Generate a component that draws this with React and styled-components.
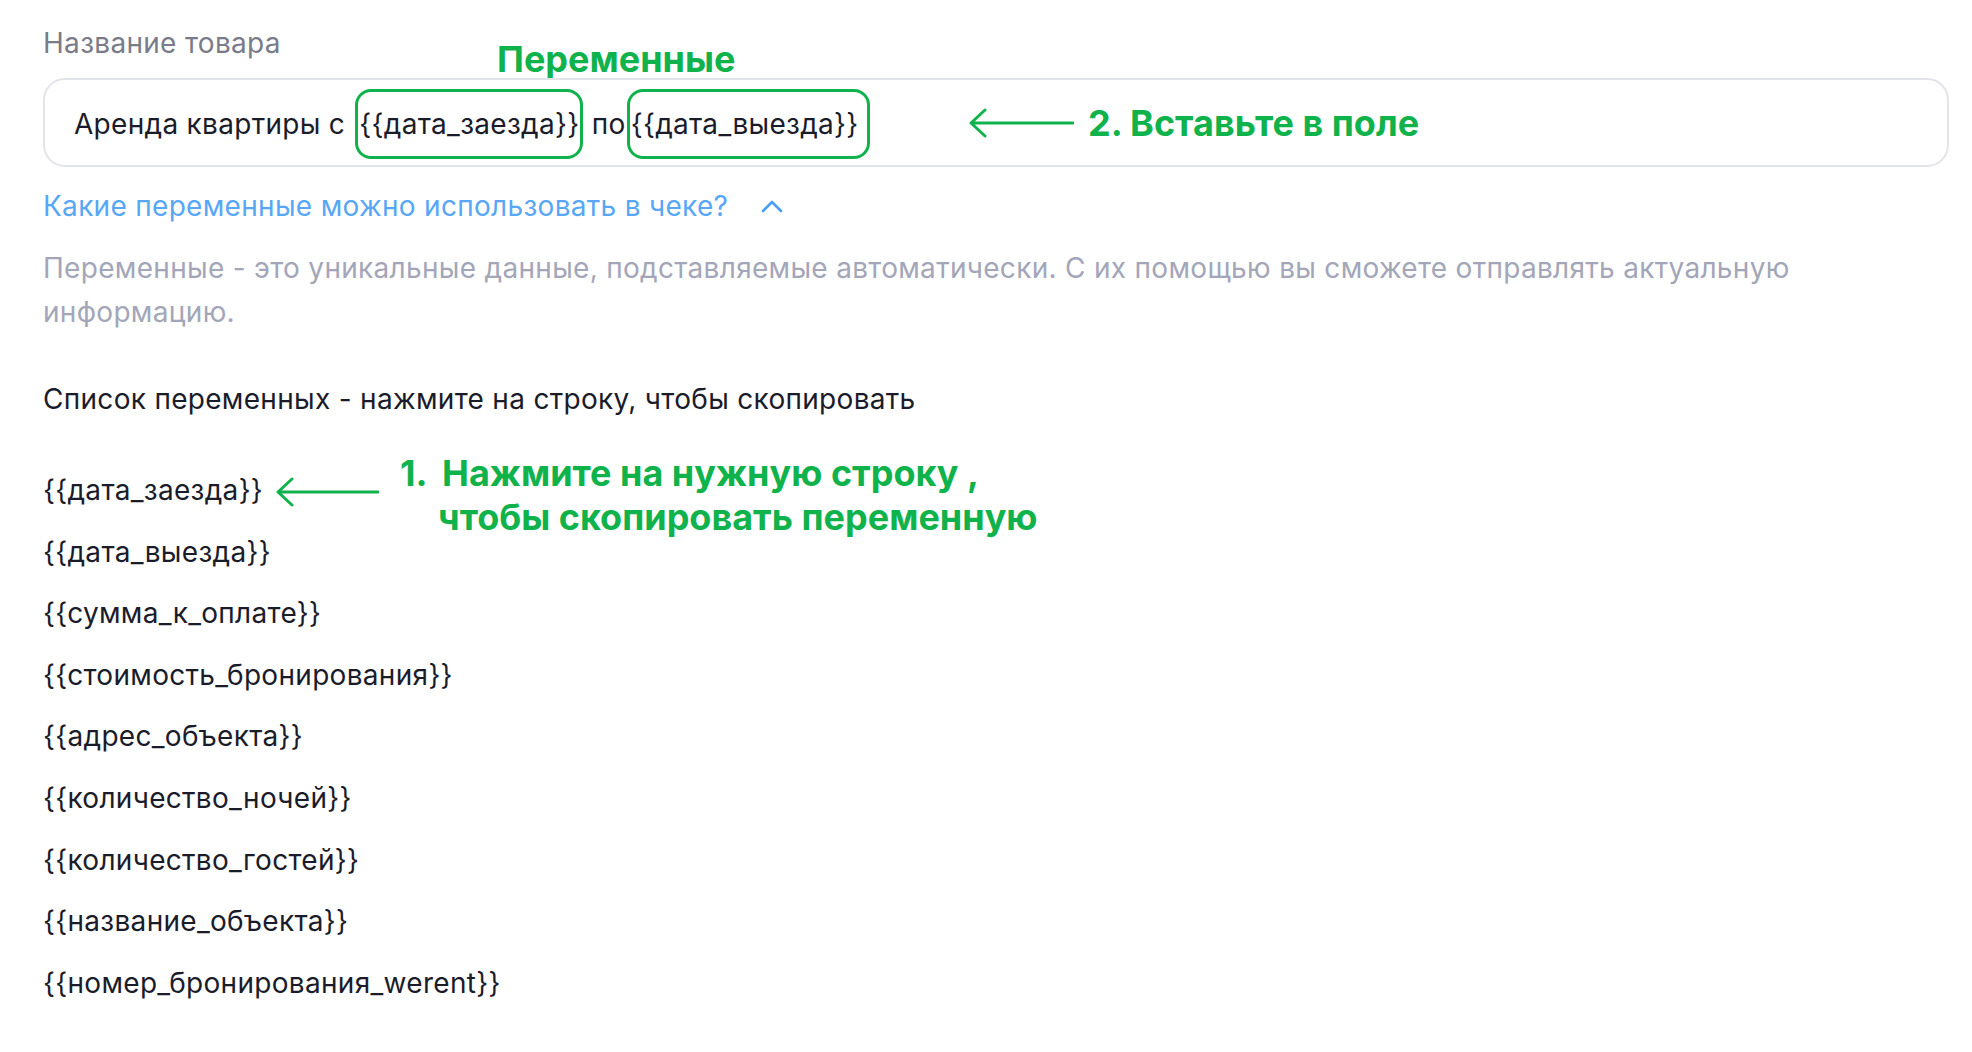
import React from 'react';
import styled, { createGlobalStyle } from 'styled-components';

const GREEN = '#10b24c';

const GlobalStyle = createGlobalStyle`
  html, body {
    margin: 0;
    padding: 0;
    background: #ffffff;
  }
  body {
    font-family: Inter, "Noto Sans", sans-serif;
    color: #1b1c2a;
    -webkit-font-smoothing: antialiased;
  }
`;

// Page layout
const Page = styled.div`
  display: flex;
  flex-direction: column;
  padding: 26px 23px 40px 43px;
`;

const Text = styled.div`
  font-size: 28px;
  letter-spacing: 0.3px;
`;

const Field = styled.div`
  position: relative;
  display: flex;
  flex-direction: column;
`;

const FieldLabel = styled(Text)`
  line-height: 34px;
  color: #797b89;
`;

const InputBox = styled.div`
  position: relative;
  margin-top: 18px;
  display: flex;
  align-items: center;
  padding: 9px 20px 6px 29px;
  border: 2px solid #e3e3ea;
  border-radius: 22px;
  background: #fff;
`;

const InputValue = styled(Text).attrs({ as: 'span' })`
  line-height: 70px;
  white-space: pre;
  color: #1b1c2a;
`;

const Highlight = styled.span`
  display: inline-block;
  vertical-align: top;
  box-sizing: border-box;
  height: 70px;
  line-height: 64px;
  margin-left: ${(p) => p.$shift || 0}px;
  padding: 0 ${(p) => p.$padRight || 1}px 0 1px;
  border: 3px solid ${GREEN};
  border-radius: 16px;
`;

const ToggleLink = styled(Text)`
  margin-top: 22px;
  display: flex;
  align-items: center;
  gap: 33px;
  line-height: 34px;
  color: #58a7f6;
  cursor: pointer;
`;

const Description = styled(Text).attrs({ as: 'p' })`
  margin: 23px 0 0;
  max-width: 1790px;
  line-height: 44px;
  color: #a3a6b8;
`;

const ListTitle = styled(Text)`
  margin-top: 48px;
  line-height: 34px;
  color: #1b1c2a;
`;

const VarList = styled.div`
  margin-top: 44px;
  display: flex;
  flex-direction: column;
`;

const VarItem = styled(Text)`
  position: relative;
  line-height: 61.6px;
  color: #1b1c2a;
  cursor: pointer;
`;

// Green annotations laid over the screenshot
const Note = styled.div`
  font-weight: 700;
  font-size: 36px;
  line-height: 44px;
  color: ${GREEN};
  white-space: nowrap;
`;

const TopNote = styled(Note)`
  position: absolute;
  left: 454px;
  top: 13px;
  line-height: 40px;
`;

const Callout = styled.div`
  position: absolute;
  display: flex;
  align-items: ${(p) => (p.$top ? 'flex-start' : 'center')};
  gap: ${(p) => p.$gap}px;
  left: ${(p) => p.$left}px;
  top: ${(p) => p.$y};
  transform: ${(p) => (p.$top ? 'none' : 'translateY(-50%)')};
  letter-spacing: 0;
  line-height: normal;
`;

const ArrowWrap = styled.div`
  display: flex;
  margin-top: ${(p) => p.$offset || 0}px;
`;

const NoteBlock = styled(Note)`
  display: flex;
`;

const NoteNumber = styled.span`
  width: 42px;
`;

const NoteLine = styled.span`
  display: block;
  margin-left: ${(p) => p.$shift || 0}px;
`;

const Arrow = ({ width }) => (
  <svg width={width} height="30" viewBox={`0 0 ${width} 30`} fill="none">
    <path
      d={`M3 15 H${width - 1} M17 2 L3 15 L17 28`}
      stroke={GREEN}
      strokeWidth="3"
      strokeLinecap="round"
      strokeLinejoin="round"
    />
  </svg>
);

const ChevronUp = () => (
  <svg width="22" height="13" viewBox="0 0 22 13" fill="none">
    <path d="M2 11 L11 2 L20 11" stroke="#4a9df5" strokeWidth="2.6" strokeLinecap="round" strokeLinejoin="round" />
  </svg>
);

const variables = [
  '{{дата_заезда}}',
  '{{дата_выезда}}',
  '{{сумма_к_оплате}}',
  '{{стоимость_бронирования}}',
  '{{адрес_объекта}}',
  '{{количество_ночей}}',
  '{{количество_гостей}}',
  '{{название_объекта}}',
  '{{номер_бронирования_werent}}',
];

const App = () => {
  return (
    <>
      <GlobalStyle />
      <Page>
        <Field>
          <FieldLabel>Название товара</FieldLabel>
          <TopNote>Переменные</TopNote>
          <InputBox>
            <InputValue>
              Аренда квартиры с <Highlight $shift={2}>{'{{дата_заезда}}'}</Highlight>
              {' по '}
              <Highlight $shift={-7} $padRight={8}>{'{{дата_выезда}}'}</Highlight>
            </InputValue>
            <Callout $left={923} $y="50%" $gap={14}>
              <Arrow width={106} />
              <Note>2. Вставьте в поле</Note>
            </Callout>
          </InputBox>
        </Field>

        <ToggleLink>
          Какие переменные можно использовать в чеке?
          <ChevronUp />
        </ToggleLink>

        <Description>
          Переменные - это уникальные данные, подставляемые автоматически. С их помощью вы сможете отправлять
          актуальную информацию.
        </Description>

        <ListTitle>Список переменных - нажмите на строку, чтобы скопировать</ListTitle>

        <VarList>
          {variables.map((v, i) => (
            <VarItem key={v}>
              {v}
              {i === 0 && (
                <Callout $left={232} $y="-9px" $gap={21} $top>
                  <ArrowWrap $offset={26}>
                    <Arrow width={104} />
                  </ArrowWrap>
                  <NoteBlock>
                    <NoteNumber>1.</NoteNumber>
                    <span>
                      <NoteLine>Нажмите на нужную строку ,</NoteLine>
                      <NoteLine $shift={-4}>чтобы скопировать переменную</NoteLine>
                    </span>
                  </NoteBlock>
                </Callout>
              )}
            </VarItem>
          ))}
        </VarList>
      </Page>
    </>
  );
};

export default App;
